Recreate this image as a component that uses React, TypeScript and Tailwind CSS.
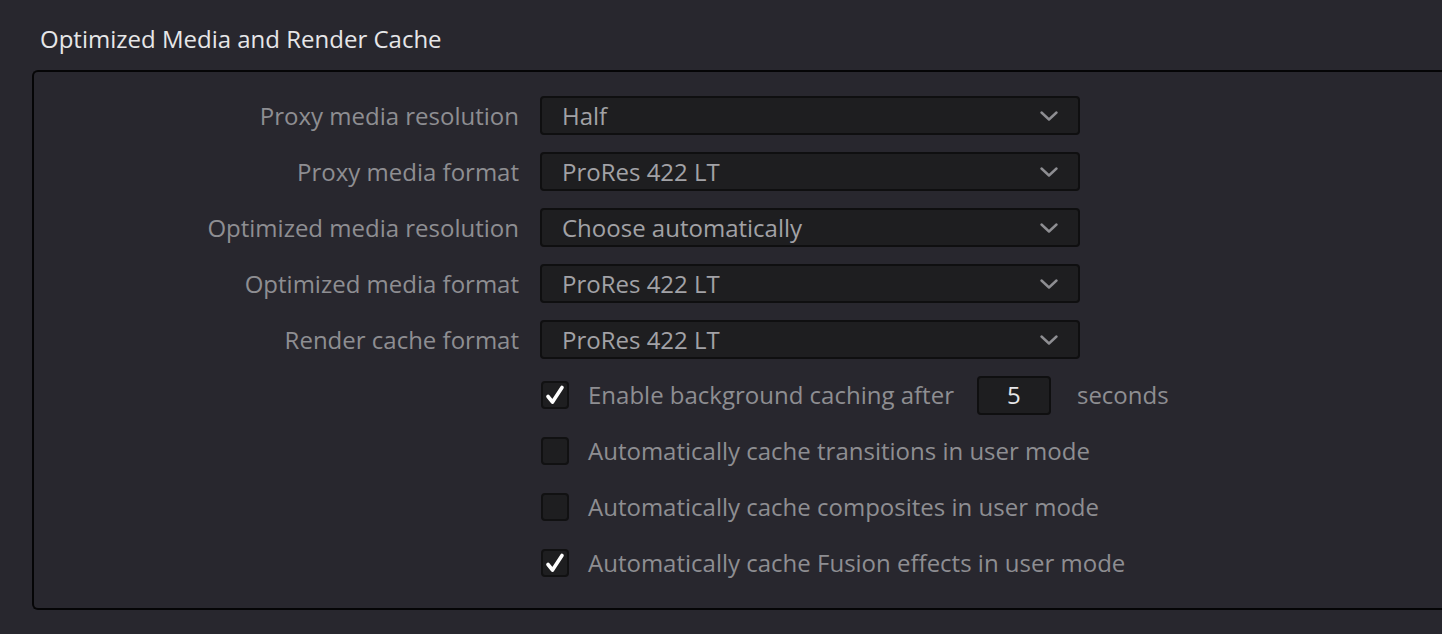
const selects = [
  { label: "Proxy media resolution", value: "Half" },
  { label: "Proxy media format", value: "ProRes 422 LT" },
  { label: "Optimized media resolution", value: "Choose automatically" },
  { label: "Optimized media format", value: "ProRes 422 LT" },
  { label: "Render cache format", value: "ProRes 422 LT" },
];

const Check = ({ checked }: { checked: boolean }) => (
  <div className="flex h-[28px] w-[28px] shrink-0 items-center justify-center rounded-[4px] border-2 border-[#111112] bg-[#1e1e20]">
    {checked && (
      <svg width="22" height="22" viewBox="0 0 22 22">
        <path
          d="M4 12.5 L8.5 18 L18 3.5"
          fill="none"
          stroke="#ffffff"
          strokeWidth="3.6"
          strokeLinecap="round"
          strokeLinejoin="round"
        />
      </svg>
    )}
  </div>
);

const Chevron = () => (
  <svg width="18" height="10" viewBox="0 0 18 10" className="shrink-0">
    <path d="M1.5 1.5 L9 8.5 L16.5 1.5" fill="none" stroke="#8e8e92" strokeWidth="2.4" strokeLinecap="round" strokeLinejoin="round" />
  </svg>
);

export default function App() {
  return (
    <div
      className="h-[634px] w-[1442px] overflow-hidden bg-[#28272e]"
      style={{ fontFamily: '"Open Sans", sans-serif' }}
    >
      <div className="px-[40px] pt-[23px] text-[24px] leading-[32px] text-[#e6e6e8]">
        Optimized Media and Render Cache
      </div>

      <div className="ml-[32px] mt-[15px] h-[540px] rounded-l-[6px] border-y-2 border-l-2 border-[#050506] pt-[24px]">
        <div className="flex flex-col gap-[17px]">
          {selects.map((s) => (
            <div className="flex items-center" key={s.label}>
              <div className="w-[485px] text-right text-[24px] leading-[32px] text-[#8e8e92]">{s.label}</div>
              <div className="ml-[21px] flex h-[39px] w-[540px] items-center justify-between rounded-[4px] border-2 border-[#0f0f10] bg-[#1e1e20] pl-[20px] pr-[20px] text-[24px] text-[#a2a2a6]">
                <span>{s.value}</span>
                <Chevron />
              </div>
            </div>
          ))}
        </div>

        <div className="ml-[507px] mt-[8px] flex flex-col text-[24px] text-[#8e8e92]">
          <div className="flex h-[56px] items-center">
            <Check checked />
            <span className="ml-[19px]">Enable background caching after</span>
            <div className="ml-[23px] flex h-[39px] w-[74px] items-center justify-center rounded-[4px] border-2 border-[#0f0f10] bg-[#1e1e20] text-[#e6e6e8]">
              5
            </div>
            <span className="ml-[26px]">seconds</span>
          </div>
          <div className="flex h-[56px] items-center">
            <Check checked={false} />
            <span className="ml-[19px]">Automatically cache transitions in user mode</span>
          </div>
          <div className="flex h-[56px] items-center">
            <Check checked={false} />
            <span className="ml-[19px]">Automatically cache composites in user mode</span>
          </div>
          <div className="flex h-[56px] items-center">
            <Check checked />
            <span className="ml-[19px]">Automatically cache Fusion effects in user mode</span>
          </div>
        </div>
      </div>
    </div>
  );
}
